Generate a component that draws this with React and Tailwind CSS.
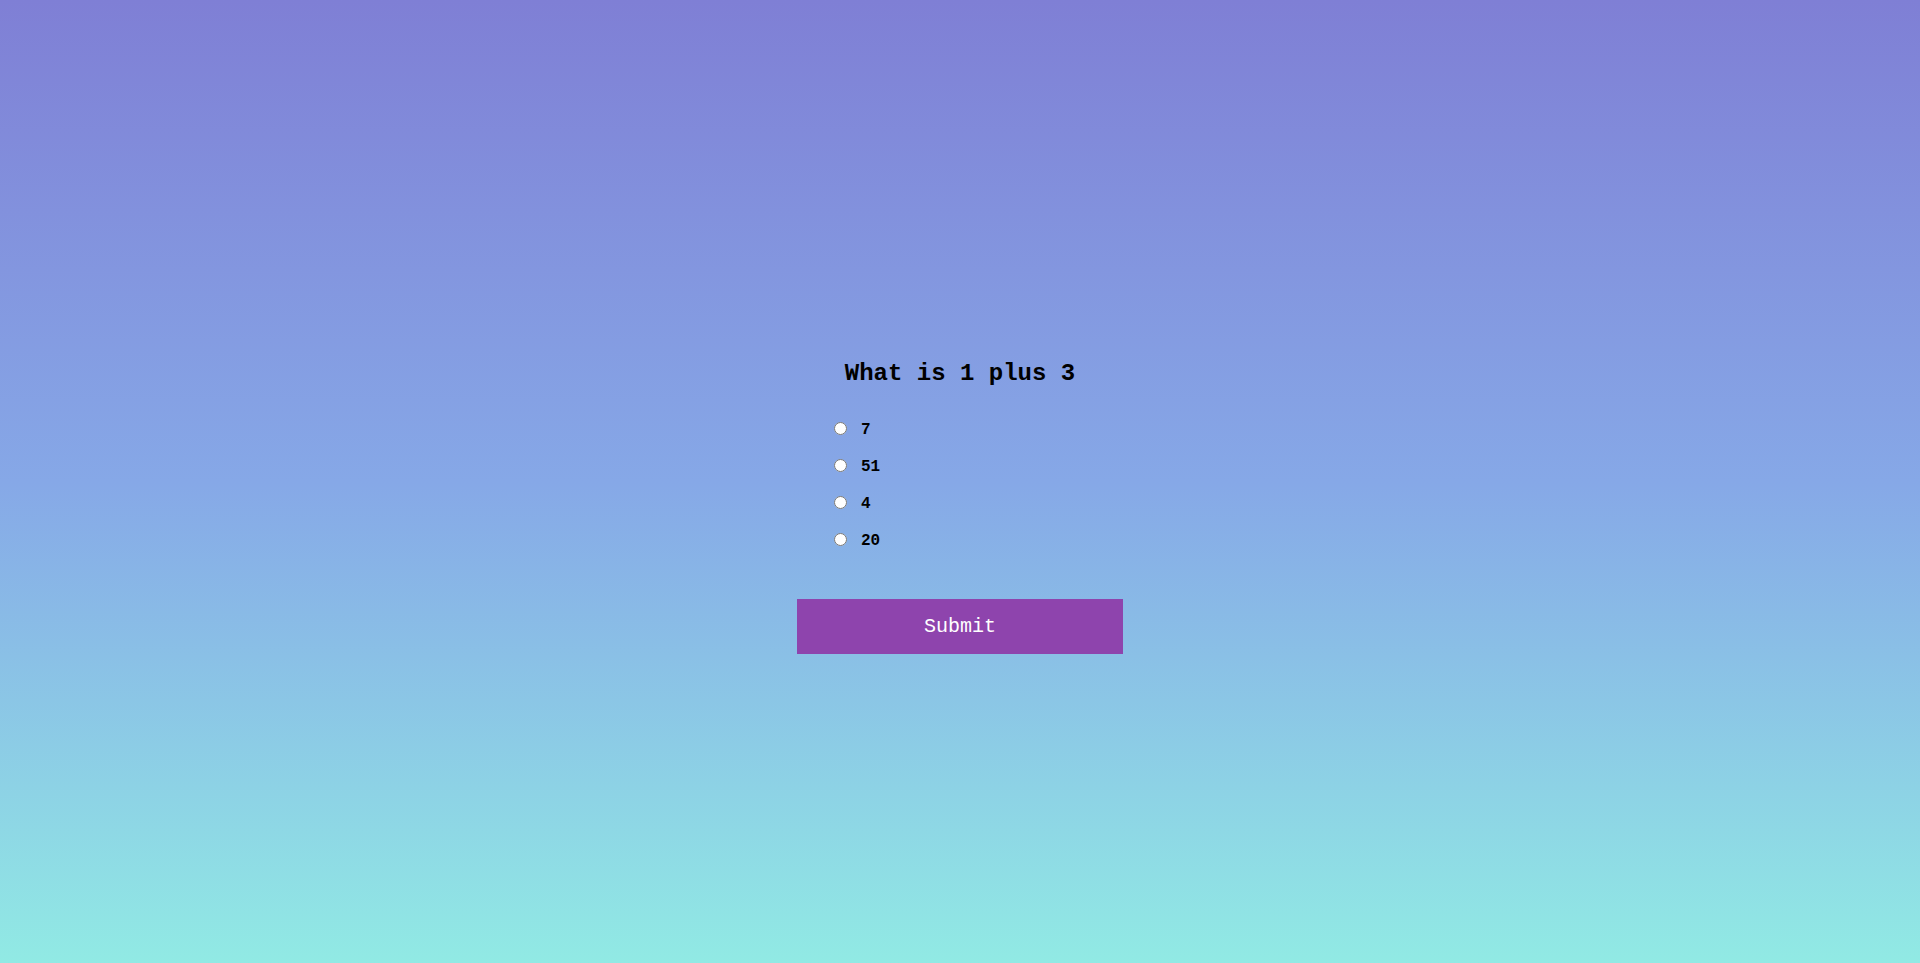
import React, { useState } from 'react'

const options = ['7', '51', '4', '20']

export default function App() {
  const [picked, setPicked] = useState(null)

  return (
    <div className="min-h-screen w-full flex items-center justify-center bg-[linear-gradient(to_bottom,#7f7fd5,#86a8e7,#91eae4)] font-['Liberation_Mono','Courier_New',monospace]">
      <div className="w-[326px] pt-[49px] flex flex-col">
        <h2 className="text-center text-[24px] leading-[32px] font-bold text-black">What is 1 plus 3</h2>
        <ul className="mt-[27px] pl-[37px] flex flex-col gap-[13px]">
          {options.map((o) => (
            <li key={o} className="flex items-center gap-[14px] h-[24px]">
              <input
                type="radio"
                name="answer"
                className="m-0 mb-[2px] w-[13px] h-[13px]"
                checked={picked === o}
                onChange={() => setPicked(o)}
              />
              <label className="text-[16px] leading-[24px] font-bold text-black translate-y-[1px]">{o}</label>
            </li>
          ))}
        </ul>
        <button className="mt-[47px] h-[55px] w-full bg-[#8e44ad] text-white text-[20px] cursor-pointer">
          Submit
        </button>
      </div>
    </div>
  )
}
